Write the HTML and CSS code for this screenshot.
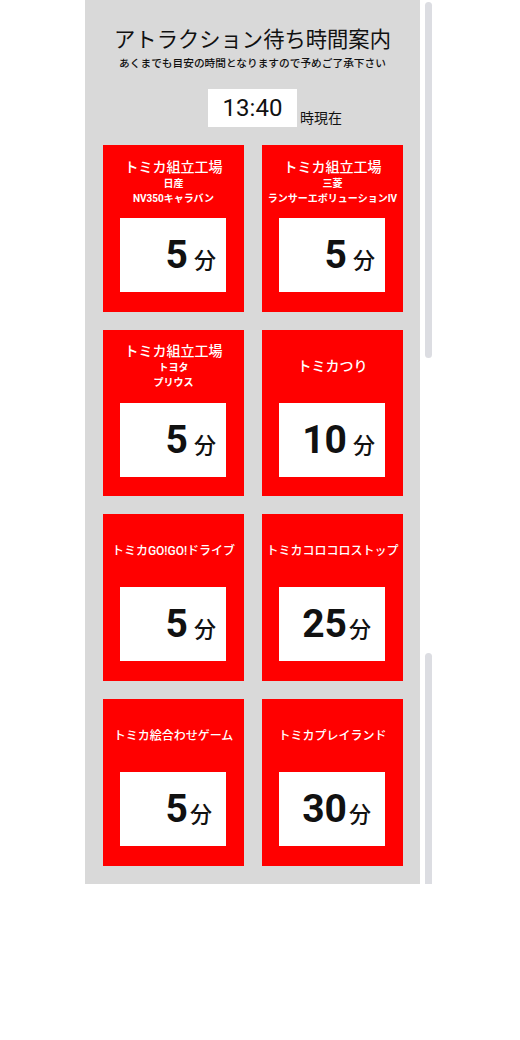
FILE: index.html
```html
<!DOCTYPE html>
<html lang="ja">
<head>
  <meta charset="UTF-8">
  <meta name="viewport" content="width=device-width, initial-scale=1.0">
  <title>アトラクション待ち時間案内</title>
  <link rel="stylesheet" href="styles.css">
</head>
<body>
  <div class="page">
    <div class="board">
      <h1>アトラクション待ち時間案内</h1>
      <div class="description">あくまでも目安の時間となりますので予めご了承下さい</div>

      <div class="now">
        <div class="now-time">13:40</div>
        <div class="now-label">時現在</div>
      </div>

      <div class="grid">
        <div class="card">
          <div class="card-head">
            <div class="card-title">トミカ組立工場</div>
            <div class="card-sub">日産</div>
            <div class="card-sub">NV350キャラバン</div>
          </div>
          <div class="wait"><span class="num">5</span> <span class="unit">分</span></div>
        </div>

        <div class="card">
          <div class="card-head">
            <div class="card-title">トミカ組立工場</div>
            <div class="card-sub">三菱</div>
            <div class="card-sub">ランサーエボリューションIV</div>
          </div>
          <div class="wait"><span class="num">5</span> <span class="unit">分</span></div>
        </div>

        <div class="card">
          <div class="card-head">
            <div class="card-title">トミカ組立工場</div>
            <div class="card-sub">トヨタ</div>
            <div class="card-sub">プリウス</div>
          </div>
          <div class="wait"><span class="num">5</span> <span class="unit">分</span></div>
        </div>

        <div class="card">
          <div class="card-head">
            <div class="card-title">トミカつり</div>
          </div>
          <div class="wait"><span class="num">10</span> <span class="unit">分</span></div>
        </div>

        <div class="card">
          <div class="card-head">
            <div class="card-title small">トミカGO!GO!ドライブ</div>
          </div>
          <div class="wait"><span class="num">5</span> <span class="unit">分</span></div>
        </div>

        <div class="card">
          <div class="card-head">
            <div class="card-title small">トミカコロコロストップ</div>
          </div>
          <div class="wait"><span class="num">25</span><span class="unit">分</span></div>
        </div>

        <div class="card">
          <div class="card-head">
            <div class="card-title small">トミカ絵合わせゲーム</div>
          </div>
          <div class="wait"><span class="num">5</span><span class="unit">分</span></div>
        </div>

        <div class="card">
          <div class="card-head">
            <div class="card-title small">トミカプレイランド</div>
          </div>
          <div class="wait"><span class="num">30</span><span class="unit">分</span></div>
        </div>
      </div>
    </div>

    <div class="scroll-track">
      <div class="scroll-thumb top"></div>
      <div class="scroll-thumb bottom"></div>
    </div>
  </div>
</body>
</html>
```

FILE: styles.css
```css
body {
  margin: 0;
  background-color: #fff;
  font-family: Roboto, "Noto Sans CJK JP", sans-serif;
  color: #111;
}

.page {
  display: flex;
  align-items: flex-start;
  padding-left: 85px;
}

.board {
  width: 335px;
  background-color: #d9d9d9;
  padding: 25px 0 18px;
  box-sizing: border-box;
}

h1 {
  margin: 0;
  text-align: center;
  font-size: 21.3px;
  font-weight: normal;
  line-height: 30px;
}

.description {
  margin-top: 1px;
  text-align: center;
  font-size: 10.7px;
  font-weight: 500;
  line-height: 16px;
}

.now {
  display: grid;
  grid-template-columns: 1fr auto 1fr;
  align-items: end;
  margin-top: 17px;
}

.now-time {
  grid-column: 2;
  width: 89px;
  height: 38px;
  background-color: #fff;
  text-align: center;
  font-size: 24px;
  line-height: 38px;
}

.now-label {
  padding-left: 3px;
  font-size: 14px;
  line-height: 18px;
}

.grid {
  display: grid;
  grid-template-columns: 141px 141px;
  column-gap: 18px;
  row-gap: 18px;
  padding-left: 18px;
  margin-top: 18px;
}

.card {
  height: 166.7px;
  background-color: #ff0000;
  color: #fff;
}

.card-head {
  height: 73px;
  padding-top: 1px;
  box-sizing: border-box;
  display: flex;
  flex-direction: column;
  justify-content: center;
  text-align: center;
}

.card-title {
  font-size: 14px;
  font-weight: 500;
  line-height: 17px;
}

.card-title.small {
  font-size: 12px;
}

.card-sub {
  font-size: 10px;
  font-weight: bold;
  line-height: 15px;
}

.wait {
  width: 106px;
  height: 74px;
  margin-left: 17px;
  padding-left: 18px;
  box-sizing: border-box;
  background-color: #fff;
  color: #111;
  line-height: 74px;
  white-space: nowrap;
}

.num {
  display: inline-block;
  width: 50px;
  text-align: right;
  font-size: 39px;
  font-weight: bold;
}

.unit {
  margin-left: 2px;
  font-size: 22px;
  font-weight: 500;
}

.scroll-track {
  display: flex;
  flex-direction: column;
  margin-left: 5px;
}

.scroll-thumb {
  width: 7px;
  background-color: #dcdde2;
}

.scroll-thumb.top {
  margin-top: 2px;
  height: 356px;
  border-radius: 4px;
}

.scroll-thumb.bottom {
  margin-top: 295px;
  height: 231px;
  border-radius: 4px 4px 0 0;
}
```
